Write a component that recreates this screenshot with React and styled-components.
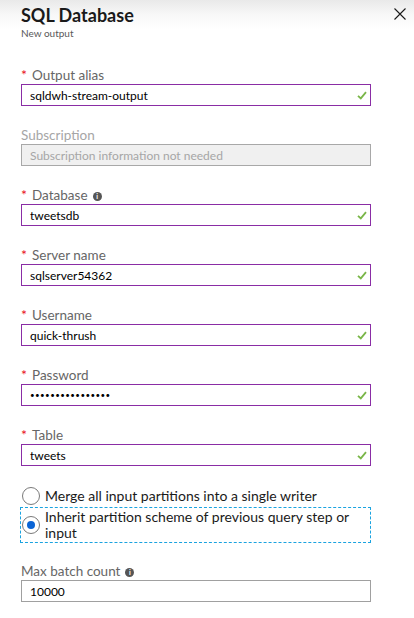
import React from "react";
import styled, { createGlobalStyle } from "styled-components";

const GlobalStyle = createGlobalStyle`
  html, body {
    margin: 0;
    padding: 0;
    background: #ffffff;
  }
  body {
    font-family: "Lato", "Liberation Sans", sans-serif;
  }
`;

const Panel = styled.div`
  width: 414px;
  height: 618px;
  background: #ffffff;
  overflow: hidden;
`;

const Header = styled.div`
  display: flex;
  justify-content: space-between;
  align-items: flex-start;
  padding: 4px 4px 0 21px;
  height: 44px;
  box-sizing: border-box;
  background: linear-gradient(to bottom, #e9e9e9 0px, #f7f7f7 14px, #ffffff 30px);
`;

const TitleBlock = styled.div`
  display: flex;
  flex-direction: column;
`;

const Title = styled.h1`
  margin: 0;
  font-size: 18px;
  line-height: 23px;
  font-weight: 700;
  color: #1a1a1a;
`;

const Subtitle = styled.div`
  font-size: 10px;
  line-height: 12px;
  color: #595959;
`;

const CloseButton = styled.button`
  border: 0;
  background: transparent;
  padding: 4px;
  margin-top: 0;
  cursor: pointer;
  display: flex;
`;

const Form = styled.div`
  display: flex;
  flex-direction: column;
  padding: 22px 43px 0 21px;
  gap: 20px;
`;

const Field = styled.div`
  display: flex;
  flex-direction: column;
`;

const Label = styled.div`
  display: flex;
  align-items: center;
  height: 18px;
  font-size: 13.5px;
  color: ${({ $disabled }) => ($disabled ? "#a6a6a6" : "#666666")};
`;

const Star = styled.span`
  color: #e81123;
  font-size: 14px;
  width: 11px;
  margin-top: -2px;
`;

const InfoIcon = styled.span`
  display: inline-flex;
  align-items: center;
  justify-content: center;
  width: 9px;
  height: 9px;
  border-radius: 50%;
  background: #555555;
  color: #ffffff;
  font-size: 7px;
  font-weight: 700;
  margin-left: 5px;
  margin-top: 2px;
`;

const InputBox = styled.div`
  display: flex;
  align-items: center;
  justify-content: space-between;
  height: 22px;
  box-sizing: border-box;
  padding: 0 3px 0 8px;
  border: 1px solid ${({ $valid, $disabled }) =>
    $valid ? "#8a2da5" : $disabled ? "#a8a8a8" : "#a0a0a0"};
  background: ${({ $disabled }) => ($disabled ? "#f0f0f0" : "#ffffff")};
  font-size: 12px;
  color: ${({ $disabled }) => ($disabled ? "#a6a6a6" : "#000000")};
`;

const Dots = styled.span`
  font-size: 8px;
  letter-spacing: 0.4px;
`;

const RadioGroup = styled.div`
  display: flex;
  flex-direction: column;
  margin-top: -1px;
  margin-bottom: -1px;
`;

const RadioRow = styled.div`
  display: flex;
  align-items: center;
  gap: 5px;
  padding: 1px;
  border: 1px dashed ${({ $focused }) => ($focused ? "#1aa3e0" : "transparent")};
  font-size: 14px;
  line-height: 16px;
  color: #1a1a1a;
  margin-left: -1px;
`;

const RadioCircle = styled.span`
  flex: none;
  width: 18px;
  height: 18px;
  box-sizing: border-box;
  border-radius: 50%;
  border: 1px solid #7a7a7a;
  background: #ffffff;
  display: flex;
  align-items: center;
  justify-content: center;

  &::after {
    content: "";
    width: 8px;
    height: 8px;
    border-radius: 50%;
    background: ${({ $checked }) => ($checked ? "#0a64d6" : "transparent")};
  }
`;

const Check = () => (
  <svg width="10" height="9" viewBox="0 0 10 9">
    <path d="M1 4.8 L3.8 7.4 L9 1.2" fill="none" stroke="#7ab648" strokeWidth="1.8" />
  </svg>
);

const CloseIcon = () => (
  <svg width="12" height="12" viewBox="0 0 12 12">
    <path d="M0.5 0.5 L11.5 11.5 M11.5 0.5 L0.5 11.5" stroke="#1a1a1a" strokeWidth="1.1" />
  </svg>
);

const fields = [
  { label: "Output alias", value: "sqldwh-stream-output", required: true },
  { label: "Subscription", value: "Subscription information not needed", disabled: true },
  { label: "Database", value: "tweetsdb", required: true, info: true },
  { label: "Server name", value: "sqlserver54362", required: true },
  { label: "Username", value: "quick-thrush", required: true },
  { label: "Password", value: "••••••••••••••••", required: true, password: true },
  { label: "Table", value: "tweets", required: true },
];

const App = () => {
  return (
    <Panel>
      <GlobalStyle />
      <Header>
        <TitleBlock>
          <Title>SQL Database</Title>
          <Subtitle>New output</Subtitle>
        </TitleBlock>
        <CloseButton aria-label="Close">
          <CloseIcon />
        </CloseButton>
      </Header>
      <Form>
        {fields.map((f) => (
          <Field key={f.label}>
            <Label $disabled={f.disabled}>
              {f.required && <Star>*</Star>}
              {f.label}
              {f.info && <InfoIcon>i</InfoIcon>}
            </Label>
            <InputBox $valid={f.required} $disabled={f.disabled}>
              {f.password ? <Dots>{f.value}</Dots> : <span>{f.value}</span>}
              {f.required && <Check />}
            </InputBox>
          </Field>
        ))}
        <RadioGroup>
          <RadioRow>
            <RadioCircle />
            <span>Merge all input partitions into a single writer</span>
          </RadioRow>
          <RadioRow $focused>
            <RadioCircle $checked />
            <span>
              Inherit partition scheme of previous query step or
              <br />
              input
            </span>
          </RadioRow>
        </RadioGroup>
        <Field>
          <Label>
            Max batch count
            <InfoIcon>i</InfoIcon>
          </Label>
          <InputBox>
            <span>10000</span>
          </InputBox>
        </Field>
      </Form>
    </Panel>
  );
};

export default App;
